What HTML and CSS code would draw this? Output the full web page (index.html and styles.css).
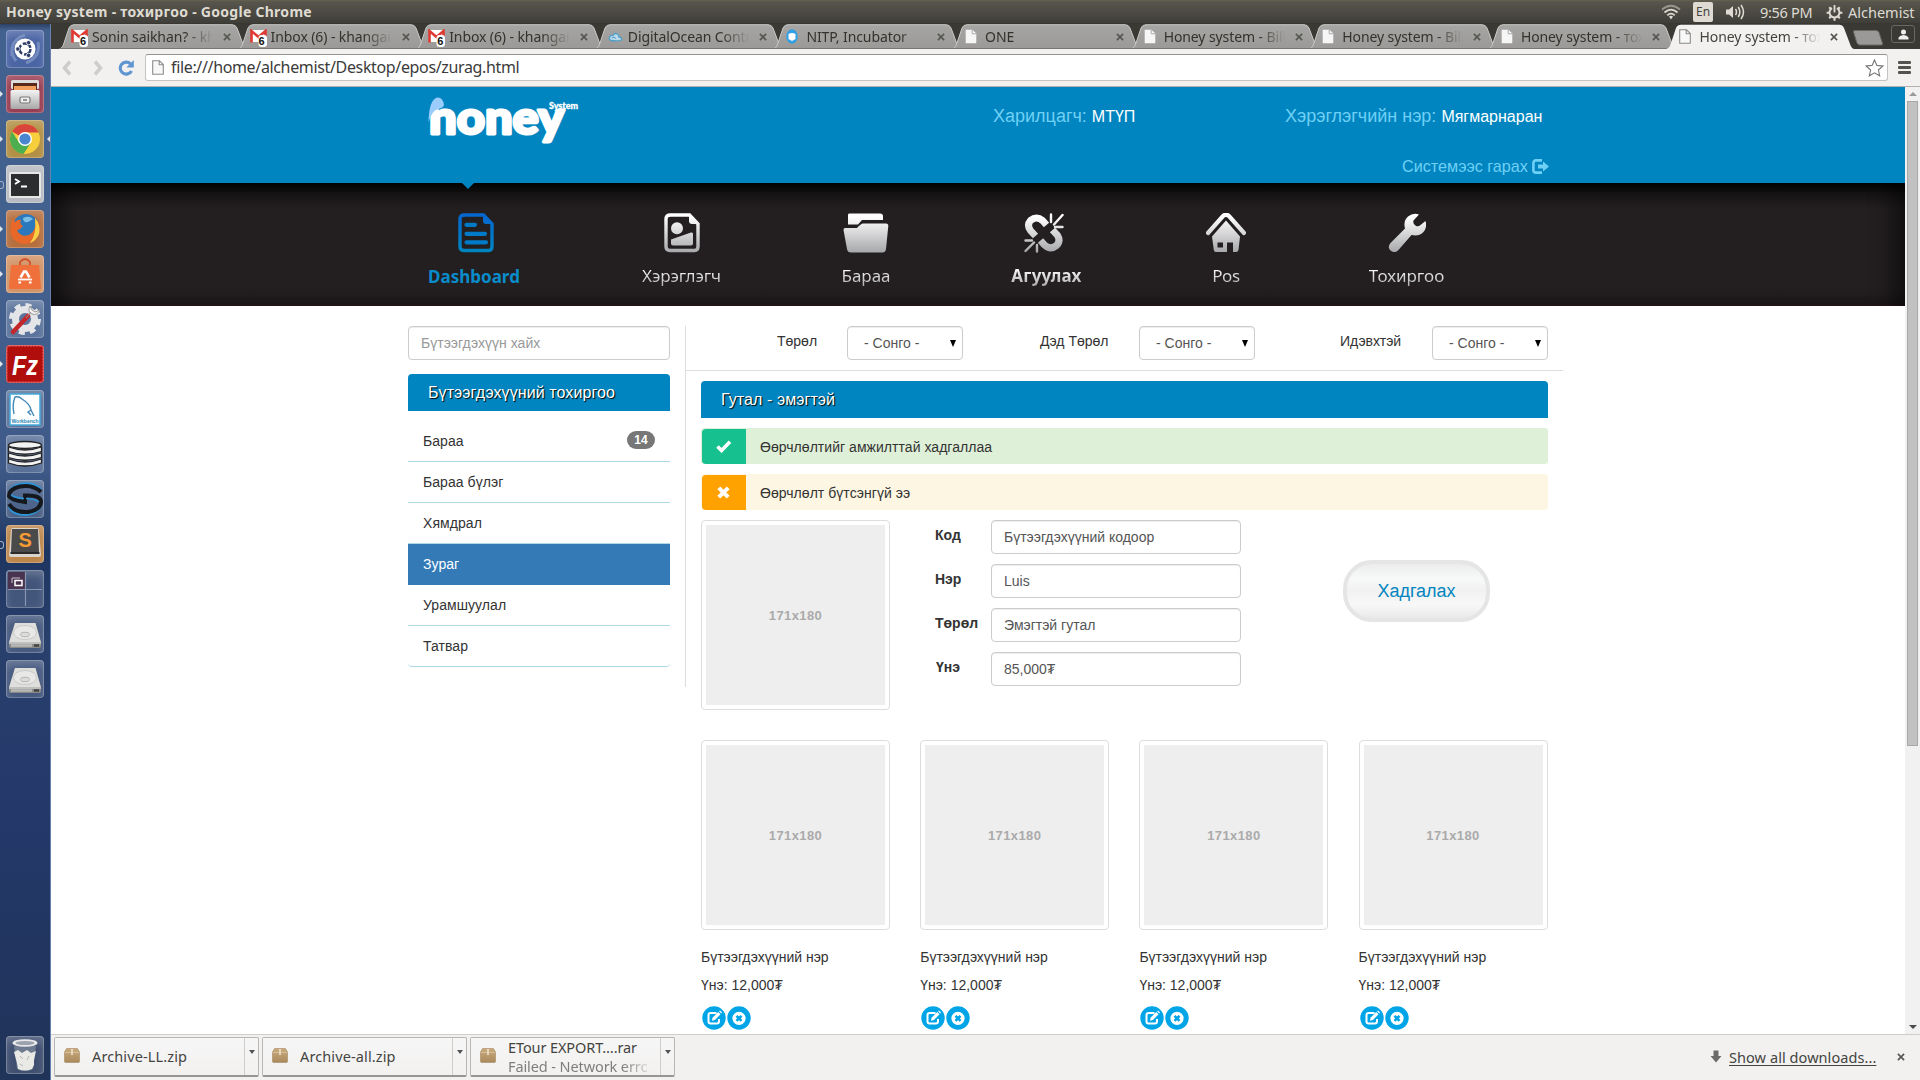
FILE: index.html
```html
<!DOCTYPE html>
<html lang="mn">
<head>
<meta charset="utf-8">
<title>Honey system - тохиргоо</title>
<link rel="stylesheet" href="styles.css">
</head>
<body>
<svg class="defs" width="0" height="0">
  <defs>
    <linearGradient id="silver" gradientUnits="userSpaceOnUse" x1="0" y1="0" x2="0" y2="40"><stop offset="0.1" stop-color="#fff"/><stop offset="1" stop-color="#a5a6a9"/></linearGradient>
    <linearGradient id="azure" gradientUnits="userSpaceOnUse" x1="0" y1="0" x2="0" y2="40"><stop offset="0.1" stop-color="#0568d0"/><stop offset="1" stop-color="#0086c0"/></linearGradient>
    <linearGradient id="tabfill" x1="0" y1="0" x2="0" y2="1"><stop offset="0" stop-color="#a6a6a4"/><stop offset="1" stop-color="#9a9997"/></linearGradient>
    <linearGradient id="boxfill" x1="0" y1="0" x2="0" y2="1"><stop offset="0" stop-color="#c9ab7e"/><stop offset="1" stop-color="#a88a5c"/></linearGradient>
    <linearGradient id="steel" x1="0" y1="0" x2="0" y2="1"><stop offset="0" stop-color="#f4f4f4"/><stop offset="1" stop-color="#a8a8a8"/></linearGradient>
  </defs>
  <symbol id="tab" viewBox="0 0 188 25"><path d="M0 25C3 24.500 4 22 5 19L10 4Q11.500 .7 15 .7H173Q176.500 .7 178 4L184 20Q185.500 24.500 188 25Z" fill="url(#tabfill)"/><path d="M0 25C3 24.500 4 22 5 19L10 4Q11.500 .7 15 .7H173Q176.500 .7 178 4L184 20Q185.500 24.500 188 25" fill="none" stroke="#c9c8c6" stroke-width="1"/><path d="M0 24.500H188" stroke="#77756f"/></symbol>
  <symbol id="tab-on" viewBox="0 0 188 25"><path d="M0 25C3 24.500 4 22 5 19L10 4Q11.500 .7 15 .7H173Q176.500 .7 178 4L184 20Q185.500 24.500 188 25Z" fill="#f2f1f0"/></symbol>
  <symbol id="gmail" viewBox="0 0 18 18"><path d="M1 1H16V13H1Z" fill="#fff"/><path d="M1.500 13.500V2L8.500 8 15.500 2V9" fill="none" stroke="#df3b34" stroke-width="2.600"/><rect x="8.500" y="6" width="8.500" height="12" rx="3" fill="#fff"/></symbol>
  <symbol id="page" viewBox="0 0 12 15"><path d="M.7 .7H7.500L11.300 4.500V14.300H.7Z" fill="#f6f6f6"/><path d="M7.200 .7V4.800H11.300" fill="none" stroke="#aaa"/></symbol>
  <symbol id="page-line" viewBox="0 0 12 15"><path d="M.7 .7H7.500L11.300 4.500V14.300H.7ZM7.200 .7V4.800H11.300" fill="#f8f8f8" stroke="#8b8b89" stroke-width="1.100"/></symbol>
  <symbol id="box" viewBox="0 0 16 15"><path d="M2.500 .5H13.500L15.500 4V13.500Q15.500 14.500 14.500 14.500H1.500Q.5 14.500 .5 13.500V4Z" fill="url(#boxfill)" stroke="#a58a60" stroke-width=".6"/><path d="M.8 4.500H15.200" stroke="#dcc7a3" stroke-width=".8"/><path d="M8 1V7" stroke="#f1e3c8" stroke-width="1.600"/></symbol>
  <symbol id="close" viewBox="0 0 9 9"><path d="M1 1L8 8M8 1L1 8" stroke="#555551" stroke-width="1.800"/></symbol>
  <symbol id="edit" viewBox="0 0 24 24"><circle cx="12" cy="12" r="11.700" fill="#00a5e8"/><path d="M14.500 7H8.700Q6.500 7 6.500 9.200V15.500Q6.500 17.500 8.700 17.500H14.800Q17 17.500 17 15.300V13" fill="none" stroke="#fff" stroke-width="2"/><path d="M10 14.700L10.500 11.700 16.200 6 18.500 8.300 12.900 14.100Z" fill="#fff"/><path d="M17.100 5.200L18 4.500 20 6.500 19.200 7.400Z" fill="#fff"/></symbol>
  <symbol id="remove" viewBox="0 0 24 24"><circle cx="12" cy="12" r="11.700" fill="#00a5e8"/><circle cx="12" cy="12.300" r="6.600" fill="#fff"/><path d="M9.500 9.800L14.500 14.800M14.500 9.800L9.500 14.800" stroke="#00a5e8" stroke-width="2.600"/></symbol>
  <symbol id="disk" viewBox="0 0 38 38"><path d="M9 8H29.500L35 27V31Q35 33 33 33H5Q3 33 3 31V27Z" fill="#8a8a88"/><path d="M9 8H29.500L34.800 27H3.200Z" fill="#dededc"/><ellipse cx="19" cy="17.500" rx="11.500" ry="7" fill="#e8e8e6" stroke="#c9c9c7"/><ellipse cx="19" cy="19.500" rx="4.500" ry="2.200" fill="#dcdcda" stroke="#b5b5b3"/><path d="M3 27.500H35V28.500H3Z" fill="#f4f4f4"/><path d="M5 30.500H26" stroke="#b9b9b7" stroke-width="2.500"/><path d="M28 30.500H33" stroke="#444" stroke-width="2.500"/></symbol>
</svg>

<header class="panel">
  <div class="panel-title">Honey system - тохиргоо - Google Chrome</div>
  <div class="tray">
    <svg class="wifi" width="20" height="16" viewBox="0 0 20 16" fill="none" stroke="#dfdbd2" stroke-width="1.800"><path d="M1 5.500Q10-2 19 5.500" opacity=".5"/><path d="M3.500 8.500Q10 2.800 16.500 8.500M6.300 11.300Q10 8 13.700 11.300"/><path d="M8 12.600Q10 11 12 12.600L10 15.500Z" fill="#dfdbd2" stroke="none"/></svg>
    <span class="lang">En</span>
    <svg class="sound" width="21" height="16" viewBox="0 0 21 16" fill="none" stroke="#dfdbd2" stroke-width="1.500"><path d="M1 5.500H4L8 2V14L4 10.500H1Z" fill="#dfdbd2" stroke="none"/><path d="M10.500 5Q12.500 8 10.500 11M13.200 3Q16.500 8 13.200 13M16 1Q21 8 16 15"/></svg>
    <span class="clock">9:56 PM</span>
    <svg class="cog" width="17" height="17" viewBox="0 0 17 17" fill="none" stroke="#dfdbd2"><path d="M6 4.200A5 5 0 1 0 11 4.200" stroke-width="2"/><path d="M8.500 1V8.500" stroke-width="1.800"/><path d="M3.200 3.200L5 5M13.800 3.200L12 5M.6 8.800H3.500M16.400 8.800H13.500M3.200 14.200L5 12.300M13.800 14.200L12 12.300M8.500 16.700V14" stroke-width="2"/></svg>
    <span class="user">Alchemist</span>
  </div>
</header>

<div class="desktop">
  <aside class="launcher">
    <div class="tile t-dash"><svg viewBox="0 0 38 38"><path d="M6 26Q4 10 19 5M32 12Q35 27 20 33M10 31Q3 22 8 12" fill="none" stroke="#8ea4cf" stroke-width="3" opacity=".6"/><circle cx="19" cy="19" r="10.500" fill="#fff"/><circle cx="19" cy="19" r="5.500" fill="none" stroke="#2c3a66" stroke-width="2.400" stroke-dasharray="9.500 2"/><g fill="#2c3a66" stroke="#fff" stroke-width=".8"><circle cx="11.800" cy="19" r="2.200"/><circle cx="22.600" cy="12.600" r="2.200"/><circle cx="22.600" cy="25.400" r="2.200"/></g></svg></div>
    <div class="tile t-red run"><svg viewBox="0 0 38 38"><rect x="5" y="5" width="28" height="9" rx="1.500" fill="#ddd"/><rect x="7" y="8" width="24" height="7" fill="#5a2b1b"/><path d="M8 11H30V16H8Z" fill="#f3a05e"/><rect x="4.500" y="15" width="29" height="19" rx="1.500" fill="url(#steel)"/><rect x="14" y="22" width="10" height="6" rx="1.500" fill="#eee" stroke="#777" stroke-width="1.200"/><path d="M17 25H21" stroke="#777" stroke-width="1.500"/></svg></div>
    <div class="tile t-gold run focus"><svg viewBox="0 0 38 38"><circle cx="19" cy="19" r="15" fill="#f7cf3d"/><path d="M19 19L6 11.500A15 15 0 0 1 32.500 12.500H19Z" fill="#d9453b"/><path d="M6 11.500A15 15 0 0 0 17.500 34L25 22.500H13Z" fill="#4cae4f"/><circle cx="19" cy="19" r="7" fill="#fff"/><circle cx="19" cy="19" r="5.600" fill="#4a86cf"/></svg></div>
    <div class="tile t-grey open"><svg viewBox="0 0 38 38"><rect x="3" y="7" width="32" height="26" rx="1.500" fill="#e6e6e4"/><rect x="5" y="9" width="28" height="22" fill="#2c2d2e"/><path d="M9 14L13 16.500 9 19M15 21.500H21" fill="none" stroke="#fff" stroke-width="1.800"/></svg></div>
    <div class="tile t-rust run"><svg viewBox="0 0 38 38"><circle cx="20" cy="17" r="13" fill="#2b78bd"/><path d="M17 8Q23 5 27 9L22 12Q17 13 17 8Z" fill="#7cc0e8"/><path d="M29 8Q36 15 33 24Q30 33 20 34Q9 34 5 25Q3 17 7 8L9 12Q12 9 15 10Q13 14 17 16Q14 20 11 20Q15 28 23 25Q31 21 29 8Z" fill="#e8682a"/><path d="M29 8Q35 15 33 24Q30 31 24 33Q31 24 29 8Z" fill="#f9cf45"/></svg></div>
    <div class="tile t-peach run"><svg viewBox="0 0 38 38"><path d="M14 11V7Q19 1 24 7V11" fill="none" stroke="#d4532c" stroke-width="1.800"/><path d="M5 10H33L35 33Q35 34 34 34H4Q3 34 3 33Z" fill="#f0703c"/><path d="M14.500 22.500L18 16.500H20L23.500 22.500M14 26.500L13.500 28.500M24 26.500L24.500 28.500" fill="none" stroke="#fff" stroke-width="2.600"/><path d="M12 24.500H26" stroke="#fff" stroke-width="1.800"/></svg></div>
    <div class="tile t-clear"><svg viewBox="0 0 38 38"><circle cx="19" cy="19" r="9.500" fill="none" stroke="#e3e5e8" stroke-width="7"/><circle cx="19" cy="19" r="14" fill="none" stroke="#e3e5e8" stroke-width="4" stroke-dasharray="6 5"/><path d="M7 32L22 16" stroke="#c4272b" stroke-width="4.500" stroke-linecap="round"/><path d="M20 18L25 12M24 6Q21 12 26 14Q31 16 34 10L29 12 26 10Z" fill="#f3f3f3" stroke="#999" stroke-width="1"/></svg></div>
    <div class="tile t-fz run"><svg viewBox="0 0 38 38"><rect x="1" y="1" width="36" height="36" rx="2" fill="#b00d0d" stroke="#e66" stroke-width="1" stroke-dasharray="2 1"/><text x="6" y="30" class="fz" textLength="26" lengthAdjust="spacingAndGlyphs">Fz</text></svg></div>
    <div class="tile t-clear"><svg viewBox="0 0 38 38"><rect x="4" y="4" width="30" height="31" fill="#fff" stroke="#45a9da" stroke-width="1.500"/><path d="M8 24Q6 14 9 7Q13 6 16 9Q24 14 25 20L28 26M25 20L22 22L25 25" fill="none" stroke="#4289b8" stroke-width="1.400"/><text x="5.500" y="33" class="wb" textLength="27" lengthAdjust="spacingAndGlyphs">Workbench</text></svg></div>
    <div class="tile t-clear"><svg viewBox="0 0 38 38"><g stroke="#222" stroke-width="1.300" fill="#f2f2f2"><path d="M2.500 24V28Q19 34 35.500 28V24Q19 30 2.500 24Z"/><path d="M2.500 18V22.500Q19 28 35.500 22.500V18Q19 24 2.500 18Z"/><path d="M2.500 12V16.500Q19 22 35.500 16.500V12Q19 18 2.500 12Z"/><ellipse cx="19" cy="10" rx="16.500" ry="3.500"/></g></svg></div>
    <div class="tile t-clear"><svg viewBox="0 0 38 38"><path d="M35 9Q28 2.500 17 3.500Q4 5 3 14M3 27Q6 35 20 35Q35 33 35 23" fill="none" stroke="#2c93d6" stroke-width="2"/><path d="M35 12Q27 4 14 6.500Q3 9 3 16Q5 20 19 22V15.500Q34 15 35 21Q35 30 22 32Q9 33 3 24" fill="none" stroke="#15181d" stroke-width="4"/><path d="M5 15Q10 18 18 18.500M20 18.500Q28 18.500 33 22" fill="none" stroke="#2c93d6" stroke-width="1.500"/></svg></div>
    <div class="tile t-subl open"><svg viewBox="0 0 38 38"><path d="M5 5Q5 3 7 3H31Q33 3 33 5L35 30Q35 32 33 32H5Q3 32 3 30Z" fill="#d9d5cc"/><path d="M6 4H32L33 27H5Z" fill="#4a4a4a"/><path d="M4.500 27H33.500V29H4.500Z" fill="#2b2b2b"/><text x="12.500" y="22" class="subl">S</text></svg></div>
    <div class="tile t-clear"><svg viewBox="0 0 38 38"><rect x="2" y="2" width="17" height="17" fill="#4a3350"/><path d="M2 19.500H36M19.500 2V36" stroke="#8796b0" stroke-width="1.200"/><path d="M6 13V8H14" fill="none" stroke="#c9c2cd" stroke-width="1"/><rect x="9" y="10.500" width="7" height="5" fill="none" stroke="#fff" stroke-width="1.500"/></svg></div>
    <div class="tile t-clear"><svg viewBox="0 0 38 38"><use href="#disk"/></svg></div>
    <div class="tile t-clear"><svg viewBox="0 0 38 38"><use href="#disk"/></svg></div>
    <div class="tile t-clear trash"><svg viewBox="0 0 38 38"><path d="M8 10H30L27 33Q19 37 11 33Z" fill="#7b8698" opacity=".8"/><ellipse cx="19" cy="7" rx="12.500" ry="3.800" fill="#e8e9ea"/><ellipse cx="19" cy="7" rx="9.500" ry="2" fill="#9ba2ad"/><path d="M8 16L12 14 16 17 21 14 25 17 30 15 28 24 28 29 26 33Q19 36 12 33L11 27Z" fill="#e9e9e6"/><path d="M14 20L17 23M23 20L21 24M14 28L17 30" stroke="#b5b5b3" fill="none"/></svg></div>
  </aside>

  <main class="window">
    <div class="tabs">
      <div class="tab"><svg class="shape"><use href="#tab"/></svg><span class="fav mail"><svg width="18" height="18"><use href="#gmail"/></svg><b>6</b></span><span class="label">Sonin saikhan? - khangai</span><svg class="x"><use href="#close"/></svg></div>
      <div class="tab"><svg class="shape"><use href="#tab"/></svg><span class="fav mail"><svg width="18" height="18"><use href="#gmail"/></svg><b>6</b></span><span class="label">Inbox (6) - khangaikh</span><svg class="x"><use href="#close"/></svg></div>
      <div class="tab"><svg class="shape"><use href="#tab"/></svg><span class="fav mail"><svg width="18" height="18"><use href="#gmail"/></svg><b>6</b></span><span class="label">Inbox (6) - khangaikh</span><svg class="x"><use href="#close"/></svg></div>
      <div class="tab"><svg class="shape"><use href="#tab"/></svg><span class="fav"><svg width="15" height="12" viewBox="0 0 15 12"><path d="M3 9.500Q0 8 2 5.500Q3 4 5 4.500Q7 1 10 3.500Q11 5 11 6Q14 6 13.500 9Q10 10.500 3 9.500Z" fill="#b9d9ea" stroke="#4f9fc8" stroke-width="1.300"/><path d="M4 7Q6 5 8 7.500" fill="none" stroke="#4f9fc8"/></svg></span><span class="label">DigitalOcean Control</span><svg class="x"><use href="#close"/></svg></div>
      <div class="tab"><svg class="shape"><use href="#tab"/></svg><span class="fav"><svg width="12" height="15" viewBox="0 0 12 15"><ellipse cx="6" cy="7.500" rx="5.700" ry="7.200" fill="#2f9fe8"/><path d="M2.500 5Q6 3 9.500 5V10L6 12 2.500 10Z" fill="#fff"/></svg></span><span class="label">NITP, Incubator</span><svg class="x"><use href="#close"/></svg></div>
      <div class="tab"><svg class="shape"><use href="#tab"/></svg><span class="fav"><svg width="12" height="15"><use href="#page"/></svg></span><span class="label">ONE</span><svg class="x"><use href="#close"/></svg></div>
      <div class="tab"><svg class="shape"><use href="#tab"/></svg><span class="fav"><svg width="12" height="15"><use href="#page"/></svg></span><span class="label">Honey system - Billing</span><svg class="x"><use href="#close"/></svg></div>
      <div class="tab"><svg class="shape"><use href="#tab"/></svg><span class="fav"><svg width="12" height="15"><use href="#page"/></svg></span><span class="label">Honey system - Billing</span><svg class="x"><use href="#close"/></svg></div>
      <div class="tab"><svg class="shape"><use href="#tab"/></svg><span class="fav"><svg width="12" height="15"><use href="#page"/></svg></span><span class="label">Honey system - тохиргоо</span><svg class="x"><use href="#close"/></svg></div>
      <div class="tab on"><svg class="shape"><use href="#tab-on"/></svg><span class="fav"><svg width="12" height="15"><use href="#page-line"/></svg></span><span class="label">Honey system - тохиргоо</span><svg class="x"><use href="#close"/></svg></div>
      <svg class="newtab" width="32" height="16" viewBox="0 0 32 16"><path d="M3 .5H24Q26 .5 27 2.500L30.500 13.500Q31 15 29 15H8Q6 15 5 13L1.500 2Q1 .5 3 .5Z" fill="#9a9997" stroke="#6a6964"/></svg>
      <span class="profile"><svg width="11" height="11" viewBox="0 0 11 11"><circle cx="5.500" cy="3" r="2.500" fill="#eee"/><path d="M.5 10.500V8.500Q2 6 5.500 6T10.500 8.500V10.500Z" fill="#eee"/></svg></span>
    </div>

    <div class="toolbar">
      <svg class="arrow" width="12" height="16" viewBox="0 0 12 16"><path d="M9 1.500L3.500 8 9 14.500" fill="none" stroke="#cfcdcb" stroke-width="3.500"/></svg>
      <svg class="arrow" width="12" height="16" viewBox="0 0 12 16"><path d="M3 1.500L8.500 8 3 14.500" fill="none" stroke="#cfcdcb" stroke-width="3.500"/></svg>
      <svg class="reload" width="17" height="18" viewBox="0 0 17 18"><path d="M13.500 12A6 6 0 1 1 12.500 4.800" fill="none" stroke="#5f96d2" stroke-width="3.200"/><path d="M15.800 1V8.500H8.300Z" fill="#5f96d2"/></svg>
      <div class="omnibox">
        <svg width="12" height="15"><use href="#page-line"/></svg>
        <span class="url">file:///home/alchemist/Desktop/epos/zurag.html</span>
        <svg class="star" width="19" height="18" viewBox="0 0 19 18"><path d="M9.500 1L11.900 6.400 17.800 7 13.400 11 14.700 16.800 9.500 13.800 4.300 16.800 5.600 11 1.200 7 7.100 6.400Z" fill="#fff" stroke="#777" stroke-width="1.100"/></svg>
      </div>
      <div class="burger"><i></i><i></i><i></i></div>
    </div>

    <div class="viewport">
      <div class="page">
        <div class="site-head">
          <div class="container head-grid">
            <svg class="logo" width="152" height="50" viewBox="0 0 152 50">
              <text x="1" y="38" class="logo-main" textLength="135" lengthAdjust="spacingAndGlyphs">noney</text>
              <text x="121" y="13" class="logo-sub" textLength="29" lengthAdjust="spacingAndGlyphs">System</text>
              <path d="M.5 26Q1 4 9 1.500Q15 1 16 9Q15 12 9 13.500Q4 15 .5 26Z" fill="#9acdfb"/>
            </svg>
            <div class="head-info"><span>Харилцагч: <b>МТҮП</b></span></div>
            <div class="head-info"><span>Хэрэглэгчийн нэр: <b>Мягмарнаран</b></span>
              <a class="logout">Системээс гарах <svg width="18" height="15" viewBox="0 0 18 15"><path d="M10 1.400H4Q1.400 1.400 1.400 4V11Q1.400 13.600 4 13.600H10" fill="none" stroke="#6fd0f5" stroke-width="2.600"/><path d="M6 5.500H11V2.500L17 7.500 11 12.500V9.500H6Z" fill="#6fd0f5"/></svg></a>
            </div>
          </div>
        </div>
        <nav class="site-nav">
          <div class="nav-row">
            <a class="n1 active"><svg width="36" height="40" viewBox="0 0 36 40"><path d="M6.500 2H25.500L34 11V33.500Q34 37.500 30.500 37.500H6Q2 37.500 2 33.500V6Q2 2 6.500 2Z" fill="none" stroke="url(#azure)" stroke-width="3.400"/><path d="M25 1L35 11H28Q25 11 25 8Z" fill="url(#azure)"/><path d="M8.500 11.800H17M8.500 20.800H27M8.500 29.300H28" stroke="#0079c6" stroke-width="4.200" stroke-linecap="round"/></svg><span>Dashboard</span></a>
            <a class="n2"><svg width="36" height="40" viewBox="0 0 36 40"><path d="M6.500 2H25.500L34 11V33.500Q34 37.500 30.500 37.500H6Q2 37.500 2 33.500V6Q2 2 6.500 2Z" fill="none" stroke="url(#silver)" stroke-width="3.400"/><path d="M25 1L35 11H28Q25 11 25 8Z" fill="url(#silver)"/><circle cx="13" cy="15.300" r="6" fill="url(#silver)"/><path d="M7 26.500L27 19.500Q29 19 29 21V30.500Q29 32.500 27 32.500H9Q7 32.500 7 30.500Z" fill="url(#silver)"/></svg><span>Хэрэглэгч</span></a>
            <a class="n3"><svg width="46" height="40" viewBox="0 0 46 40"><path d="M6 .5H37Q40 .5 40 3V7H19L15 11.500H5V2Q5 .5 6 .5Z" fill="url(#silver)"/><path d="M2 15H14Q18 10.500 20 10.500H43Q45.500 10.500 45.300 13L43 36Q42.500 39.500 39.500 39.500H8Q4.500 39.500 4 36L.5 17Q.5 15 2 15Z" fill="url(#silver)"/></svg><span>Бараа</span></a>
            <a class="n4"><svg width="40" height="40" viewBox="0 0 40 40"><g fill="none" stroke="url(#silver)" stroke-linecap="round"><path d="M11.500 23L6.500 17.500Q2.500 12 6.500 7.500Q12.500 2.500 18.500 7.500L22.500 12" stroke-width="7" stroke-linecap="butt"/><path d="M28.500 17L33.500 22.500Q37 28 32.500 32.500Q26.500 37.500 20.500 32L16.500 27.500" stroke-width="7" stroke-linecap="butt"/><path d="M27 1.500V9M38.500 2L30 11.500M31 14H38.500M1.500 27.500H8M1.500 38L10 29.500M13 32V38.500" stroke-width="2.400"/></g></svg><span>Агуулах</span></a>
            <a class="n5"><svg width="40" height="40" viewBox="0 0 40 40"><path d="M2 20L17 3Q20 .5 23 3L38 20" fill="none" stroke="url(#silver)" stroke-width="4.200" stroke-linecap="round"/><path fill-rule="evenodd" d="M20 7.500L34 23.500 32.500 37Q32 39 30 39H27V29.500H21V39H10Q8 39 7.800 37L6 23.500ZM11.500 29.500V34.500H17V29.500Z" fill="url(#silver)"/></svg><span>Pos</span></a>
            <a class="n6"><svg width="38" height="40" viewBox="0 0 38 40"><path d="M31 1.500L25.500 7.500Q24.500 11 28 13Q30.500 14 32.500 12L37.500 8Q39.500 15 35 19.500Q31 23.500 23.500 22L10 37.500Q6.500 40.500 2.500 37.500Q-1 34 2.500 30L17 15.500Q15 8 20 3.500Q25-.5 31 1.500Z" fill="url(#silver)"/></svg><span>Тохиргоо</span></a>
          </div>
        </nav>

        <div class="container content">
          <div class="side">
            <div class="field ph">Бүтээгдэхүүн хайх</div>
            <div class="bar">Бүтээгдэхүүний тохиргоо</div>
            <ul class="list">
              <li>Бараа<span class="badge">14</span></li>
              <li>Бараа бүлэг</li>
              <li>Хямдрал</li>
              <li class="sel">Зураг</li>
              <li>Урамшуулал</li>
              <li>Татвар</li>
            </ul>
          </div>
          <div class="main">
            <div class="filters">
              <div class="filter"><label>Төрөл</label><div class="field select">- Сонго -<i></i></div></div>
              <div class="filter"><label>Дэд Төрөл</label><div class="field select">- Сонго -<i></i></div></div>
              <div class="filter"><label>Идэвхтэй</label><div class="field select">- Сонго -<i></i></div></div>
            </div>
            <div class="detail">
              <div class="bar">Гутал - эмэгтэй</div>
              <div class="alert ok"><span class="sign"><svg width="16" height="13" viewBox="0 0 16 13"><path d="M1.500 6.500L5.500 10.500 14 1.800" fill="none" stroke="#fff" stroke-width="3.600"/></svg></span><span class="msg">Өөрчлөлтийг амжилттай хадгаллаа</span></div>
              <div class="alert warn"><span class="sign"><svg width="13" height="13" viewBox="0 0 13 13"><path d="M1.800 1.800L11.200 11.200M11.200 1.800L1.800 11.200" stroke="#fff" stroke-width="4"/></svg></span><span class="msg">Өөрчлөлт бүтсэнгүй ээ</span></div>
              <div class="edit">
                <div class="thumb"><div>171x180</div></div>
                <div class="form">
                  <label>Код</label><div class="field">Бүтээгдэхүүний кодоор</div>
                  <label>Нэр</label><div class="field">Luis</div>
                  <label>Төрөл</label><div class="field">Эмэгтэй гутал</div>
                  <label class="price">Үнэ</label><div class="field">85,000₮</div>
                </div>
                <div class="save">Хадгалах</div>
              </div>
              <div class="products">
                <div class="product"><div class="thumb"><div>171x180</div></div><p>Бүтээгдэхүүний нэр</p><p>Үнэ: 12,000₮</p><div class="acts"><svg><use href="#edit"/></svg><svg><use href="#remove"/></svg></div></div>
                <div class="product"><div class="thumb"><div>171x180</div></div><p>Бүтээгдэхүүний нэр</p><p>Үнэ: 12,000₮</p><div class="acts"><svg><use href="#edit"/></svg><svg><use href="#remove"/></svg></div></div>
                <div class="product"><div class="thumb"><div>171x180</div></div><p>Бүтээгдэхүүний нэр</p><p>Үнэ: 12,000₮</p><div class="acts"><svg><use href="#edit"/></svg><svg><use href="#remove"/></svg></div></div>
                <div class="product"><div class="thumb"><div>171x180</div></div><p>Бүтээгдэхүүний нэр</p><p>Үнэ: 12,000₮</p><div class="acts"><svg><use href="#edit"/></svg><svg><use href="#remove"/></svg></div></div>
              </div>
            </div>
          </div>
        </div>
      </div>
      <div class="scroll"><i class="up"></i><div class="thumb-bar"></div><i class="down"></i></div>
    </div>

    <div class="shelf">
      <div class="dl"><svg width="16" height="15"><use href="#box"/></svg><div class="name">Archive-LL.zip</div><span class="drop"><i></i></span></div>
      <div class="dl"><svg width="16" height="15"><use href="#box"/></svg><div class="name">Archive-all.zip</div><span class="drop"><i></i></span></div>
      <div class="dl"><svg width="16" height="15"><use href="#box"/></svg><div class="name two"><span>ETour EXPORT….rar</span><span class="fail">Failed - Network error</span></div><span class="drop"><i></i></span></div>
      <div class="all"><svg width="12" height="13" viewBox="0 0 12 13"><path d="M3.500 .5H8.500V6H11.500L6 12.500 .5 6H3.500Z" fill="#6b6b69"/></svg><a>Show all downloads...</a><svg class="x"><use href="#close"/></svg></div>
    </div>
  </main>
</div>
</body>
</html>
```
FILE: styles.css
```css
* { box-sizing: border-box; }
body { margin: 0; width: 1920px; height: 1080px; overflow: hidden; background: #fff; font-family: "Liberation Sans", Arial, sans-serif; font-size: 14px; color: #333; display: flex; flex-direction: column; }
svg { display: block; flex: none; }
.defs { position: absolute; }
.panel, .tabs, .toolbar, .shelf { font-family: "Noto Sans", "Open Sans", sans-serif; }

/* system panel */
.panel { height: 24px; flex: none; display: flex; justify-content: space-between; align-items: center; padding: 0 5px 0 6px; background: linear-gradient(#66624f 0, #57554c 2px, #3f3e39 23px, #32312d); color: #dfdbd2; }
.panel-title { font-weight: 700; font-size: 14px; letter-spacing: .28px; margin-top: -2px; }
.tray { display: flex; align-items: center; font-size: 14.500px; white-space: nowrap; }
.tray span { margin-top: -1px; }
.tray .lang { margin: 0 0 0 12px; width: 20px; height: 20px; border-radius: 2px; background: #dfdbd2; color: #45443e; font-size: 12px; line-height: 20px; text-align: center; }
.wifi { margin-left: -1px; }
.sound { margin-left: 12px; }
.clock { margin-left: 14px; width: 53px; letter-spacing: -.3px; }
.cog { margin-left: 13px; }
.user { margin-left: 5px; width: 67px; }

.desktop { flex: 1; display: flex; min-height: 0; }

/* launcher */
.launcher { width: 51px; flex: none; padding: 6px 0 6px 6px; display: flex; flex-direction: column; gap: 7px; border-right: 1px solid #6482ad; background: linear-gradient(#2c4064 0, #43618f 6px, #43618f 20%, #3f5a88 42%, #304a76 46%, #1f3561 50%, #29406c 58%, #24386a 75%, #203358 100%); }
.tile { position: relative; width: 38px; height: 38px; flex: none; border-radius: 4px; box-shadow: inset 0 0 0 1px rgba(255,255,255,.22), inset 0 5px 8px rgba(255,255,255,.22); }
.tile svg { width: 38px; height: 38px; }
.trash { margin-top: auto; }
.t-dash { background: #4a64a4; }
.t-red { background: #983d52; }
.t-gold { background: #b28f45; }
.t-grey { background: #b7bac0; }
.t-rust { background: #b56f3f; }
.t-peach { background: #d29468; }
.t-clear { background: rgba(255,255,255,.14); }
.t-fz { background: #c01818; }
.t-subl { background: #bd854a; }
.run::before, .open::before, .focus::after { content: ""; position: absolute; left: -6px; top: 16px; border: 3px solid transparent; border-left-color: #dfe3ea; border-right-width: 0; }
.open::before { width: 3px; height: 6px; border: 1px solid #9fadc6; border-left: 0; border-radius: 0 3px 3px 0; }
.focus::after { left: 41px; border-left-width: 0; border-right: 3px solid #dfe3ea; }
.fz { font: italic 700 28px "Liberation Sans", sans-serif; fill: #fff; }
.wb { font: 700 6px "Liberation Sans", sans-serif; fill: #2786b5; }
.subl { font: 700 20px "Liberation Sans", sans-serif; fill: #f59a34; }

.window { flex: 1; min-width: 0; display: flex; flex-direction: column; }

/* tab strip */
.tabs { height: 25px; flex: none; display: flex; padding-left: 8px; background: #3a3934; color: #33322c; }
.tab { position: relative; width: 188px; height: 25px; flex: none; margin-right: -9.400px; padding: 0 14px 0 13px; display: flex; align-items: center; }
.tab.on { z-index: 1; color: #44443f; }
.shape { position: absolute; left: 0; top: 0; width: 188px; height: 25px; }
.fav { position: relative; width: 20px; flex: none; }
.mail svg { margin: 2px 0 0 -1px; }
.mail b { position: absolute; left: 8px; top: 8px; font: 700 11px/12px "Liberation Sans", sans-serif; color: #111; }
.label { position: relative; width: 124px; overflow: hidden; white-space: nowrap; font-size: 14px; line-height: 24px; letter-spacing: -.1px; -webkit-mask-image: linear-gradient(90deg, #000 75%, transparent 98%); mask-image: linear-gradient(90deg, #000 75%, transparent 98%); }
.x { position: relative; width: 8px; height: 8px; margin-left: 7px; }
.newtab { margin: 6px 0 0 7px; }
.profile { margin: 1px 0 0 7px; width: 24px; height: 18px; border: 1px solid #6b6963; border-radius: 3px; background: #3a3934; display: flex; align-items: center; justify-content: center; }

/* toolbar */
.toolbar { height: 38px; flex: none; display: flex; align-items: center; background: #f2f1f0; border-bottom: 1px solid #b3b1ae; padding: 0 9px 0 10px; }
.arrow + .arrow { margin-left: 19px; }
.reload { margin-left: 14px; }
.omnibox { flex: 1; height: 27px; margin: 0 10px 0 10px; display: flex; align-items: center; background: #fff; border: 1px solid #c6c4c1; border-top-color: #94938f; border-radius: 3px; padding: 0 3px 0 6px; }
.url { flex: 1; margin: -2px 0 0 7px; font-size: 16px; color: #3b3b3b; white-space: nowrap; letter-spacing: -.35px; }
.burger { width: 13px; display: grid; gap: 2px; }
.burger i { height: 3px; background: #55534f; border-radius: 1px; }

/* viewport */
.viewport { flex: 1; min-height: 0; display: flex; }
.page { flex: 1; min-width: 0; overflow: hidden; }
.container { width: 1170px; margin: 0 auto; }
.site-head { height: 96px; background: #0085c0; }
.head-grid { display: grid; grid-template-columns: 565px 292px 1fr; padding: 9px 0 0 35px; }
.head-info { padding-top: 9px; color: #6fd0f5; font-size: 18px; line-height: 22px; white-space: nowrap; }
.head-info b { font-weight: 400; font-size: 16px; color: #fff; }
.logout { display: flex; align-items: center; gap: 4px; margin: 27px 0 0 117px; font-size: 16.200px; line-height: 22px; }
.logo-main { font: 900 46px Lato, sans-serif; fill: #fff; stroke: #fff; stroke-width: 3px; stroke-linejoin: round; }
.logo-sub { font: 900 10px Lato, sans-serif; fill: #fff; stroke: #fff; stroke-width: .3px; }
.site-nav { height: 123px; background: linear-gradient(#050405 0, #161415 12px, #231f20 26px, #231f20 105px, #1c1819 121px, #2c1518 123px); box-shadow: inset 30px 0 25px -20px rgba(0,0,0,.6), inset -30px 0 25px -20px rgba(0,0,0,.6); }
.nav-row { width: 1170px; margin: 0 auto; padding: 30px 0 0 35px; display: flex; gap: 122px; font-family: "Noto Sans", "Open Sans", sans-serif; font-size: 17px; }
.nav-row a { position: relative; display: flex; flex-direction: column; align-items: center; color: #eee; }
.nav-row span { margin-top: 11px; line-height: 24px; white-space: nowrap; color: transparent; background: linear-gradient(#fff 5px, #aaa 22px); -webkit-background-clip: text; background-clip: text; }
.nav-row .active span { margin-top: 12px; background: none; color: #0a8ccb; font-weight: 700; }
.active svg { margin-left: 4px; }
.n4 svg { margin-left: -8px; }
.n1 { width: 92px; } .n2 { width: 79px; letter-spacing: -.1px; } .n3 { width: 46px; margin-right: 1px; } .n4 { width: 72px; font-weight: 700; } .n5 { width: 40px; letter-spacing: -.4px; } .n6 { width: 77px; }
.n4 span { letter-spacing: .25px; margin-left: -3px; }
.active::before { content: ""; position: absolute; left: 34px; top: -30px; border: 6px solid transparent; border-top-color: #0085c0; border-bottom-width: 0; }

.content { display: flex; padding-top: 20px; }
.side { width: 292px; height: 361px; padding: 0 15px; flex: none; }
.field { height: 34px; border: 1px solid #ccc; border-radius: 4px; background: #fff; box-shadow: inset 0 1px 1px rgba(0,0,0,.075); padding: 0 12px; line-height: 33px; color: #555; font-size: 14px; white-space: nowrap; }
.ph { color: #999; letter-spacing: .03px; }
.bar { height: 37px; background: #0085c0; border-radius: 4px 4px 0 0; padding-left: 20px; line-height: 37px; font-size: 16px; letter-spacing: .09px; color: #fff; text-shadow: 1px 1px 1px #000; }
.side .bar { margin-top: 14px; }
.list { list-style: none; margin: 10px 0 0; padding: 0; letter-spacing: .06px; }
.list li { height: 41px; padding: 0 15px; line-height: 39px; border-bottom: 1px solid #add8e6; display: flex; justify-content: space-between; align-items: center; }
.list li:last-child { border-radius: 0 0 4px 4px; }
.list .sel { background: #337ab7; border-color: #337ab7; color: #fff; }
.badge { width: 28px; height: 18px; margin-top: -2px; border-radius: 9px; background: #777; color: #fff; font-weight: 700; font-size: 12px; line-height: 18px; text-align: center; }

.main { width: 878px; flex: none; background: linear-gradient(#ddd, #ddd) 0 0 / 1px 361px no-repeat; }
.filters { height: 45px; margin-left: 1px; border-bottom: 1px solid #ddd; display: flex; padding-left: 50px; }
.filter { width: 292px; display: flex; justify-content: flex-end; flex: none; }
.filter:first-child { width: 227px; }
.filter:last-child { width: 293px; }
.filter label { margin: 5px 0 0; flex: none; line-height: 20px; width: 70px; }
.filter:nth-child(2) label { width: 99px; }
.filter:nth-child(3) label { width: 92px; }
.select { width: 116px; padding-left: 16px; position: relative; flex: none; }
.select i { position: absolute; right: 6px; top: 13px; border: 3.500px solid transparent; border-top: 7px solid #000; border-bottom: 0; }
.detail { padding: 10px 15px 0 16px; }
.alert { height: 36px; margin-top: 10px; border-radius: 3px; display: flex; align-items: center; padding: 1px 0 0 1px; gap: 14px; line-height: 35px; }
.msg { padding-top: 2px; letter-spacing: .04px; }
.ok { background: #dff0d8; }
.warn { background: #fcf6e2; }
.sign { width: 44px; height: 35px; border-radius: 4px 0 0 4px; display: flex; align-items: center; justify-content: center; }
.ok .sign { background: #17c08f; }
.warn .sign { background: #ffa200; padding-right: 2px; }
.edit { margin-top: 10px; display: flex; height: 190px; }
.thumb { width: 189px; height: 190px; border: 1px solid #ddd; border-radius: 4px; padding: 4px; flex: none; }
.thumb div { height: 180px; background: #eee; color: #aaa; font-weight: 700; font-size: 13px; letter-spacing: .4px; line-height: 181px; text-align: center; }
.form { margin-left: 45px; width: 306px; display: grid; grid-template-columns: 56px 250px; grid-auto-rows: 34px; row-gap: 10px; flex: none; }
.form label { font-weight: 700; line-height: 20px; padding-top: 5px; }
.form .price { padding-left: 1px; }
.save { margin: 40px 0 0 102px; width: 147px; height: 62px; border: 4px solid #e5e5e5; border-radius: 29px; background: linear-gradient(#ececec, #f8f9f9 28%, #f1f1f1 48%, #f8f8f9 75%, #e9e9e9); color: #0085c0; font-size: 18px; line-height: 55px; text-align: center; }
.products { margin-top: 30px; display: flex; gap: 30.200px; }
.product { width: 189px; flex: none; }
.product p { margin: 0 0 8px; line-height: 20px; white-space: nowrap; }
.product .thumb { margin-bottom: 17px; }
.acts { display: flex; gap: 1px; padding-left: 1px; margin-top: 11px; }
.acts svg { width: 24px; height: 24px; }

.scroll { width: 15px; flex: none; background: #f1f1f1; display: flex; flex-direction: column; align-items: center; }
.scroll i { border: 4px solid transparent; }
.scroll .up { margin: 5px 0 5px; border-top: 0; border-bottom-color: #9a9a9a; }
.thumb-bar { width: 11px; height: 645px; background: #c1c1c1; border: 1px solid #a8a8a8; }
.scroll .down { margin: auto 0 5px; border-bottom: 0; border-top-color: #4c4c4c; }

/* download shelf */
.shelf { height: 46px; flex: none; border-top: 1px solid #cfcdcc; background: #f2f1f0; display: flex; padding: 2px 15px 3px 3px; gap: 3px; color: #44443f; }
.dl { width: 205px; height: 40px; flex: none; border: 1px solid #b9b7b4; border-bottom: 2px solid #989693; border-radius: 2px; display: flex; align-items: center; padding-left: 9px; background: linear-gradient(#f7f6f6, #f2f1f0); }
.dl > svg { margin-bottom: 3px; }
.name { flex: 1; margin: -2px 0 0 12px; font-size: 14.500px; white-space: nowrap; overflow: hidden; letter-spacing: .12px; }
.two { line-height: 19px; display: grid; margin: 0 13px 0 12px; letter-spacing: -.1px; }
.fail { color: #7f7e7c; -webkit-mask-image: linear-gradient(90deg, #000 78%, transparent); mask-image: linear-gradient(90deg, #000 78%, transparent); }
.drop { width: 14px; height: 100%; border-left: 1px solid #cfcdca; padding: 12px 0 0 4px; flex: none; }
.drop i { display: block; width: 0; border: 3px solid transparent; border-top: 4px solid #555; border-bottom: 0; }
.all { margin-left: auto; display: flex; align-items: center; font-size: 14.500px; letter-spacing: .07px; white-space: nowrap; padding-bottom: 1px; }
.all a { margin-left: 7px; width: 149px; text-decoration: underline; text-underline-offset: 2px; }
.all .x { margin-left: 19px; }
```
